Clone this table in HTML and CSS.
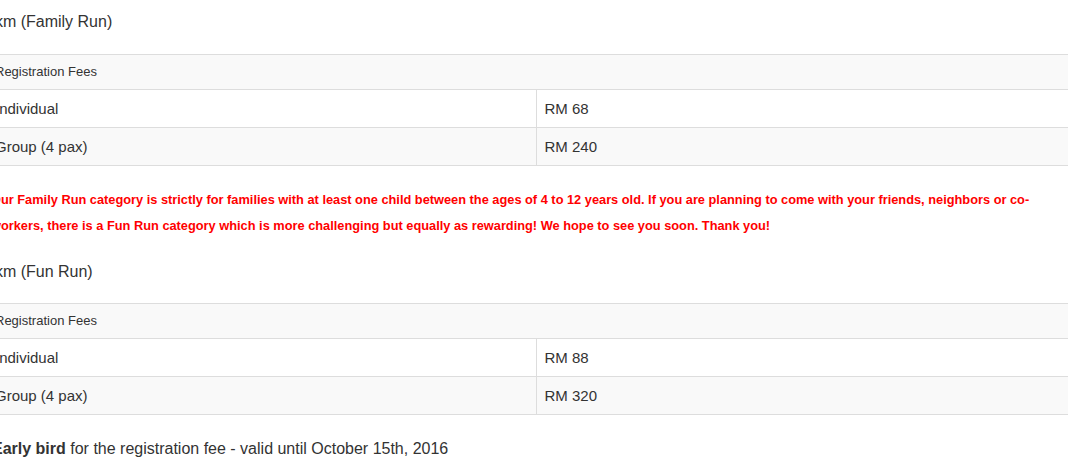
FILE: index.html
```html
<!DOCTYPE html>
<html lang="en">
<head>
<meta charset="utf-8">
<title>Registration Fees</title>
<link rel="stylesheet" href="styles.css">
</head>
<body>
<div class="page">
  <h4 class="cat-title first">5km (Family Run)</h4>
  <table class="fees">
    <tr class="head"><td colspan="2">Registration Fees</td></tr>
    <tr><td>Individual</td><td>RM 68</td></tr>
    <tr class="alt"><td>Group (4 pax)</td><td>RM 240</td></tr>
  </table>
  <p class="note">Our Family Run category is strictly for families with at least one child between the ages of 4 to 12 years old. If you are planning to come with your friends, neighbors or co-workers, there is a Fun Run category which is more challenging but equally as rewarding! We hope to see you soon. Thank you!</p>
  <h4 class="cat-title">5km (Fun Run)</h4>
  <table class="fees">
    <tr class="head"><td colspan="2">Registration Fees</td></tr>
    <tr><td>Individual</td><td>RM 88</td></tr>
    <tr class="alt"><td>Group (4 pax)</td><td>RM 320</td></tr>
  </table>
  <p class="early"><strong>Early bird</strong> for the registration fee - valid until October 15th, 2016</p>
</div>
</body>
</html>
```
FILE: styles.css
```css
html, body {
  margin: 0;
  padding: 0;
  overflow: hidden;
  background: #fff;
}
body {
  font-family: "Liberation Sans", Arial, sans-serif;
  color: #333;
}
.page {
  margin-left: -13px;
  width: 1098px;
}
.cat-title {
  font-size: 16px;
  font-weight: normal;
  line-height: 1.1;
  margin: 24px 0 23px -1px;
}
.cat-title.first {
  margin-top: 13px;
}
.fees {
  width: 100%;
  table-layout: fixed;
  border-collapse: collapse;
  margin-bottom: 21px;
}
.fees td {
  border-top: 1px solid #ddd;
  border-bottom: 1px solid #ddd;
  padding: 8px;
  font-size: 15px;
  line-height: 21px;
  vertical-align: top;
}
.fees td + td {
  border-left: 1px solid #ddd;
}
.fees .head td {
  background: #f9f9f9;
  font-size: 13px;
  line-height: 18px;
}
.fees .alt td {
  background: #f9f9f9;
}
.note {
  margin: 0 40px 0 4px;
  color: #ff0000;
  font-weight: bold;
  font-size: 12.8px;
  line-height: 26px;
}
.early {
  margin: 0 0 0 5px;
  font-size: 16px;
  line-height: 22px;
  padding-top: 2px;
}
```
